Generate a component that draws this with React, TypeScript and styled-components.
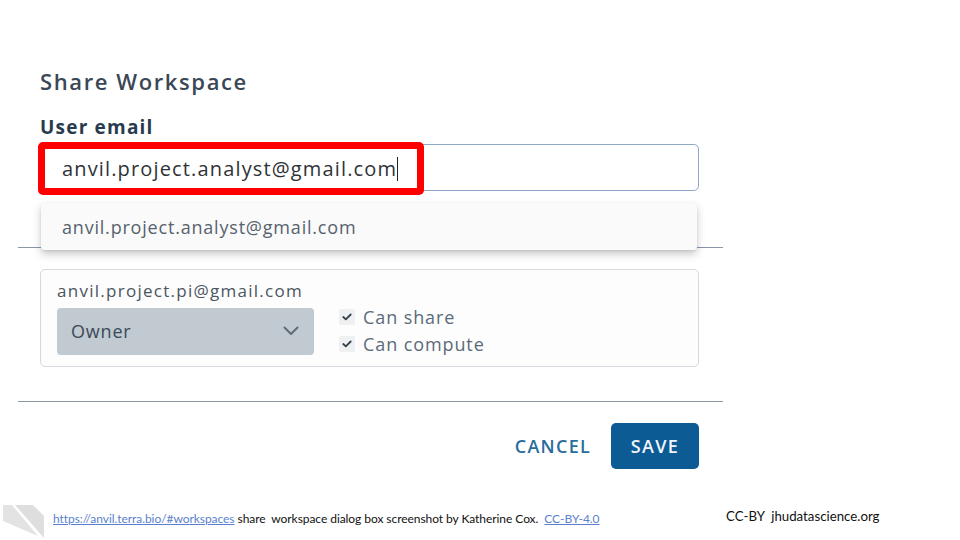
import React from "react";
import styled, { createGlobalStyle } from "styled-components";

const Global = createGlobalStyle`
  html, body { margin: 0; padding: 0; background: #ffffff; }
  body { font-family: "Open Sans", "Liberation Sans", sans-serif; }
`;

const Page = styled.div`
  position: relative;
  width: 960px;
  height: 540px;
  overflow: hidden;
  display: flex;
  flex-direction: column;
  background: #fff;
`;

const Dialog = styled.div`
  margin-left: 18px;
  width: 705px;
  display: flex;
  flex-direction: column;
`;

const Inner = styled.div`
  padding: 0 24px 0 22px;
  display: flex;
  flex-direction: column;
`;

const Title = styled.h1`
  margin: 66px 0 0;
  font-size: 22px;
  line-height: 30px;
  font-weight: 600;
  color: #3a4756;
  letter-spacing: 1.6px;
`;

const Label = styled.div`
  margin-top: 19px;
  font-size: 19px;
  line-height: 24px;
  font-weight: 700;
  color: #273b4f;
  letter-spacing: 1.2px;
`;

const Field = styled.div`
  position: relative;
  margin-top: 5px;
  height: 47px;
  box-sizing: border-box;
  border: 1.5px solid #8fa8c9;
  border-radius: 5px;
  background: #fff;
`;

const Highlight = styled.div`
  position: absolute;
  left: -3px;
  top: -3px;
  width: 386px;
  height: 53px;
  box-sizing: border-box;
  border: 7px solid #ff0000;
  border-radius: 5px;
  display: flex;
  align-items: center;
  padding-left: 17px;
  background: #fff;
`;

const Typed = styled.span`
  font-size: 20px;
  color: #2f3337;
  letter-spacing: 1.15px;
  border-right: 1.5px solid #222;
  padding-right: 0;
  line-height: 24px;
`;

const Suggestions = styled.div`
  position: absolute;
  left: 0;
  right: 1px;
  top: 58px;
  height: 47px;
  background: #fafafa;
  border-radius: 3px;
  box-shadow: 0 4px 8px rgba(0, 0, 0, 0.22), 0 1px 2px rgba(0, 0, 0, 0.08);
  display: flex;
  align-items: center;
  padding-left: 21px;
  font-size: 18px;
  color: #56626d;
  letter-spacing: 0.8px;
  z-index: 2;
`;

const Rule = styled.hr<{ $top: number }>`
  margin: ${(p) => p.$top}px 0 0;
  border: none;
  border-top: 1.5px solid #8797a8;
  height: 0;
`;

const Card = styled.div`
  margin: 21px 24px 0 22px;
  height: 98px;
  box-sizing: border-box;
  border: 1.5px solid #d3d9de;
  border-radius: 5px;
  background: #fdfdfd;
  padding: 9px 16px 0 16px;
  display: flex;
  flex-direction: column;
`;

const CardEmail = styled.div`
  font-size: 17px;
  line-height: 24px;
  color: #4b5660;
  letter-spacing: 1.27px;
`;

const CardRow = styled.div`
  margin-top: 4px;
  display: flex;
  align-items: center;
  gap: 25px;
`;

const Select = styled.div`
  width: 257px;
  height: 47px;
  box-sizing: border-box;
  background: #c1c9d1;
  border-radius: 4px;
  display: flex;
  align-items: center;
  justify-content: space-between;
  padding: 0 15px 0 14px;
  font-size: 18px;
  color: #394a58;
  letter-spacing: 0.8px;
`;

const Checks = styled.div`
  display: flex;
  flex-direction: column;
  gap: 5px;
  margin-top: -1px;
`;

const CheckRow = styled.div`
  display: flex;
  align-items: center;
  gap: 8px;
  font-size: 18px;
  line-height: 22px;
  color: #5b6b79;
  letter-spacing: 0.9px;
`;

const Box = styled.span`
  width: 16px;
  height: 16px;
  background: #eff0f1;
  border-radius: 2px;
  display: flex;
  align-items: center;
  justify-content: center;
`;

const Actions = styled.div`
  margin-top: 21px;
  padding-right: 24px;
  display: flex;
  justify-content: flex-end;
  align-items: center;
  gap: 20px;
`;

const TextButton = styled.button`
  border: none;
  background: none;
  padding: 0;
  font-family: inherit;
  font-size: 18px;
  font-weight: 600;
  color: #2a6c9c;
  letter-spacing: 1.27px;
`;

const PrimaryButton = styled.button`
  width: 88px;
  height: 46px;
  padding: 0;
  border: none;
  border-radius: 5px;
  background: #0d5b95;
  color: #f2f6fa;
  font-family: inherit;
  font-size: 18px;
  font-weight: 600;
  letter-spacing: 1.4px;
`;

const Footer = styled.div`
  margin-top: auto;
  height: 50px;
  display: flex;
  align-items: flex-start;
`;

const Logo = styled.svg`
  flex: none;
`;

const Caption = styled.div`
  margin: 22px 0 0 5px;
  width: 673px;
  font-family: Lato, "Liberation Sans", sans-serif;
  font-size: 12px;
  line-height: 14px;
  color: #111;
  white-space: pre;
  letter-spacing: -0.06px;
`;

const Link = styled.a`
  color: #5b7fce;
  text-decoration: underline;
`;

const Credit = styled.div`
  margin-top: 18px;
  font-family: Lato, "Liberation Sans", sans-serif;
  font-size: 13.25px;
  line-height: 16px;
  color: #111;
  white-space: pre;
`;

const Chevron = () => (
  <svg width="16" height="10" viewBox="0 0 16 10">
    <path d="M1.5 1.5 L8 8 L14.5 1.5" fill="none" stroke="#5f6d79" strokeWidth="2" strokeLinecap="round" strokeLinejoin="round" />
  </svg>
);

const Tick = () => (
  <svg width="10" height="8" viewBox="0 0 10 8">
    <path d="M1.3 4 L3.8 6.3 L8.7 1.5" fill="none" stroke="#34414c" strokeWidth="1.8" strokeLinecap="round" strokeLinejoin="round" />
  </svg>
);

export default function App() {
  return (
    <>
      <Global />
      <Page>
        <Dialog>
          <Inner>
            <Title>Share Workspace</Title>
            <Label>User email</Label>
            <Field>
              <Highlight>
                <Typed>anvil.project.analyst@gmail.com</Typed>
              </Highlight>
              <Suggestions>anvil.project.analyst@gmail.com</Suggestions>
            </Field>
          </Inner>
          <Rule $top={56} />
          <Card>
            <CardEmail>anvil.project.pi@gmail.com</CardEmail>
            <CardRow>
              <Select>
                <span>Owner</span>
                <Chevron />
              </Select>
              <Checks>
                <CheckRow>
                  <Box><Tick /></Box>
                  Can share
                </CheckRow>
                <CheckRow>
                  <Box><Tick /></Box>
                  Can compute
                </CheckRow>
              </Checks>
            </CardRow>
          </Card>
          <Rule $top={34} />
          <Actions>
            <TextButton>CANCEL</TextButton>
            <PrimaryButton>SAVE</PrimaryButton>
          </Actions>
        </Dialog>
        <Footer>
          <Logo width="48" height="50" viewBox="0 0 48 50">
            <polygon points="3,15 12,15 38,46 3,31" fill="#e3e3e3" />
            <polygon points="15,15 33,15 44,26 44,48" fill="#dedede" />
          </Logo>
          <Caption>
            <Link>https://anvil.terra.bio/#workspaces</Link>
            {" share  workspace dialog box screenshot by Katherine Cox.  "}
            <Link>CC-BY-4.0</Link>
          </Caption>
          <Credit>CC-BY  jhudatascience.org</Credit>
        </Footer>
      </Page>
    </>
  );
}
